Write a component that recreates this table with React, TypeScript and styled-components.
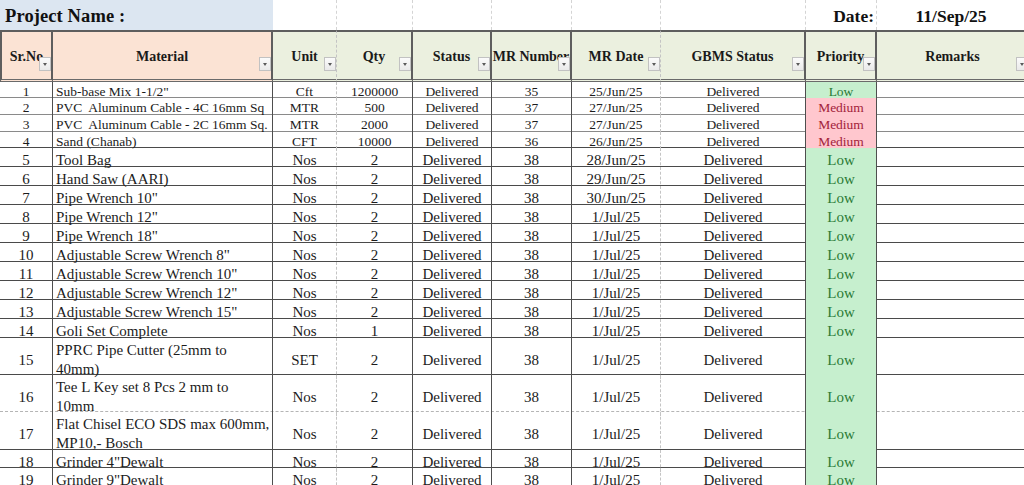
import React from "react";
import styled, { createGlobalStyle, css } from "styled-components";

const GlobalStyle = createGlobalStyle`
  html, body {
    margin: 0;
    padding: 0;
    background: #ffffff;
    overflow: hidden;
  }
  body {
    font-family: "Liberation Serif", "Times New Roman", serif;
    color: #1c1c1c;
  }
`;

type Edge = "solid" | "dashed";
type Align = "left" | "center" | "right";

interface Column {
  key: string;
  title: string;
  width: number;
  align: Align;
  edge: Edge;
  bg: string;
}

const PEACH = "#fbe3d4";
const SAGE = "#ebf0df";

const columns: Column[] = [
  { key: "sr", title: "Sr.No", width: 53, align: "center", edge: "solid", bg: PEACH },
  { key: "material", title: "Material", width: 220, align: "left", edge: "solid", bg: PEACH },
  { key: "unit", title: "Unit", width: 64, align: "center", edge: "dashed", bg: SAGE },
  { key: "qty", title: "Qty", width: 76, align: "center", edge: "solid", bg: SAGE },
  { key: "status", title: "Status", width: 79, align: "center", edge: "solid", bg: SAGE },
  { key: "mrn", title: "MR Number", width: 80, align: "center", edge: "solid", bg: SAGE },
  { key: "mrd", title: "MR Date", width: 89, align: "center", edge: "dashed", bg: SAGE },
  { key: "gbms", title: "GBMS Status", width: 145, align: "center", edge: "solid", bg: SAGE },
  { key: "priority", title: "Priority", width: 71, align: "center", edge: "solid", bg: SAGE },
  { key: "remarks", title: "Remarks", width: 153, align: "center", edge: "solid", bg: SAGE },
];

const template = columns.map((c) => `${c.width}px`).join(" ");

type Level = "Low" | "Medium";

interface Item {
  sr: number;
  material: string;
  unit: string;
  qty: string;
  status: string;
  mrn: string;
  mrd: string;
  gbms: string;
  priority: Level;
  h: number;
  small?: boolean;
  line?: "light" | "dark" | "dashed";
}

const items: Item[] = [
  { sr: 1, material: 'Sub-base Mix 1-1/2"', unit: "Cft", qty: "1200000", status: "Delivered", mrn: "35", mrd: "25/Jun/25", gbms: "Delivered", priority: "Low", h: 16, small: true, line: "light" },
  { sr: 2, material: "PVC  Aluminum Cable - 4C 16mm Sq", unit: "MTR", qty: "500", status: "Delivered", mrn: "37", mrd: "27/Jun/25", gbms: "Delivered", priority: "Medium", h: 17, small: true, line: "light" },
  { sr: 3, material: "PVC  Aluminum Cable - 2C 16mm Sq.", unit: "MTR", qty: "2000", status: "Delivered", mrn: "37", mrd: "27/Jun/25", gbms: "Delivered", priority: "Medium", h: 17, small: true, line: "light" },
  { sr: 4, material: "Sand (Chanab)", unit: "CFT", qty: "10000", status: "Delivered", mrn: "36", mrd: "26/Jun/25", gbms: "Delivered", priority: "Medium", h: 16, small: true },
  { sr: 5, material: "Tool Bag", unit: "Nos", qty: "2", status: "Delivered", mrn: "38", mrd: "28/Jun/25", gbms: "Delivered", priority: "Low", h: 19 },
  { sr: 6, material: "Hand Saw (AARI)", unit: "Nos", qty: "2", status: "Delivered", mrn: "38", mrd: "29/Jun/25", gbms: "Delivered", priority: "Low", h: 19 },
  { sr: 7, material: 'Pipe Wrench 10"', unit: "Nos", qty: "2", status: "Delivered", mrn: "38", mrd: "30/Jun/25", gbms: "Delivered", priority: "Low", h: 19 },
  { sr: 8, material: 'Pipe Wrench 12"', unit: "Nos", qty: "2", status: "Delivered", mrn: "38", mrd: "1/Jul/25", gbms: "Delivered", priority: "Low", h: 19 },
  { sr: 9, material: 'Pipe Wrench 18"', unit: "Nos", qty: "2", status: "Delivered", mrn: "38", mrd: "1/Jul/25", gbms: "Delivered", priority: "Low", h: 19 },
  { sr: 10, material: 'Adjustable Screw Wrench 8"', unit: "Nos", qty: "2", status: "Delivered", mrn: "38", mrd: "1/Jul/25", gbms: "Delivered", priority: "Low", h: 19 },
  { sr: 11, material: 'Adjustable Screw Wrench 10"', unit: "Nos", qty: "2", status: "Delivered", mrn: "38", mrd: "1/Jul/25", gbms: "Delivered", priority: "Low", h: 19 },
  { sr: 12, material: 'Adjustable Screw Wrench 12"', unit: "Nos", qty: "2", status: "Delivered", mrn: "38", mrd: "1/Jul/25", gbms: "Delivered", priority: "Low", h: 19 },
  { sr: 13, material: 'Adjustable Screw Wrench 15"', unit: "Nos", qty: "2", status: "Delivered", mrn: "38", mrd: "1/Jul/25", gbms: "Delivered", priority: "Low", h: 19 },
  { sr: 14, material: "Goli Set Complete", unit: "Nos", qty: "1", status: "Delivered", mrn: "38", mrd: "1/Jul/25", gbms: "Delivered", priority: "Low", h: 19 },
  { sr: 15, material: "PPRC Pipe Cutter (25mm to\n40mm)", unit: "SET", qty: "2", status: "Delivered", mrn: "38", mrd: "1/Jul/25", gbms: "Delivered", priority: "Low", h: 37 },
  { sr: 16, material: "Tee L Key set 8 Pcs 2 mm to\n10mm", unit: "Nos", qty: "2", status: "Delivered", mrn: "38", mrd: "1/Jul/25", gbms: "Delivered", priority: "Low", h: 37, line: "dashed" },
  { sr: 17, material: "Flat Chisel ECO SDS max 600mm,\nMP10,- Bosch", unit: "Nos", qty: "2", status: "Delivered", mrn: "38", mrd: "1/Jul/25", gbms: "Delivered", priority: "Low", h: 38 },
  { sr: 18, material: 'Grinder 4"Dewalt', unit: "Nos", qty: "2", status: "Delivered", mrn: "38", mrd: "1/Jul/25", gbms: "Delivered", priority: "Low", h: 18 },
  { sr: 19, material: 'Grinder 9"Dewalt', unit: "Nos", qty: "2", status: "Delivered", mrn: "38", mrd: "1/Jul/25", gbms: "Delivered", priority: "Low", h: 19 },
];

/* ---------- layout ---------- */

const Sheet = styled.div`
  display: flex;
  flex-direction: column;
  width: 1030px;
`;

const TitleRow = styled.div`
  display: grid;
  grid-template-columns: ${template};
  height: 30px;
`;

const TitleCell = styled.div<{ $span?: number; $align?: Align; $shade?: boolean }>`
  grid-column: span ${(p) => p.$span ?? 1};
  display: flex;
  align-items: center;
  justify-content: ${(p) =>
    p.$align === "left" ? "flex-start" : p.$align === "right" ? "flex-end" : "center"};
  padding: 2px ${(p) => (p.$align === "left" ? "5px" : "2px")} 0;
  box-sizing: border-box;
  background: ${(p) => (p.$shade ? "#dce6f1" : "#ffffff")};
  border-right: 1px dashed ${(p) => (p.$shade ? "transparent" : "#d4d4d4")};
  font-weight: 700;
  color: #111111;
`;

const ProjectLabel = styled.span`
  font-size: 18.5px;
  letter-spacing: 0.1px;
`;

const DateText = styled.span<{ $gap?: number }>`
  font-size: 17.5px;
  margin-left: ${(p) => p.$gap ?? 0}px;
`;

const HeaderRow = styled.div`
  display: grid;
  grid-template-columns: ${template};
  height: 52px;
`;

const HeaderCell = styled.div<{ $bg: string; $edge: Edge; $first?: boolean }>`
  position: relative;
  display: flex;
  align-items: center;
  justify-content: center;
  box-sizing: border-box;
  background: ${(p) => p.$bg};
  border-top: 2px solid #5e5e5e;
  border-bottom: 3px double #6a6a6a;
  border-left: ${(p) => (p.$first ? "2px solid #5e5e5e" : "none")};
  border-right: ${(p) =>
    p.$edge === "solid" ? "2px solid #5e5e5e" : "1px dashed #c4c4c4"};
  font-size: 14px;
  font-weight: 700;
  color: #1a1a1a;
  white-space: nowrap;
  overflow: hidden;
  padding-top: 3px;
`;

const FilterButton = styled.span`
  position: absolute;
  right: 0;
  top: 25px;
  width: 12px;
  height: 14px;
  box-sizing: border-box;
  border: 1px solid #c2c2c2;
  background: linear-gradient(#fbfbfb, #e9e9e9);
  display: flex;
  align-items: center;
  justify-content: center;

  &::after {
    content: "";
    width: 0;
    height: 0;
    border-left: 2.5px solid transparent;
    border-right: 2.5px solid transparent;
    border-top: 3px solid #5a5a5a;
  }
`;

const lineColor = {
  light: "1px solid #8a8a8a",
  dark: "1px solid #4a4a4a",
  dashed: "1px dashed #b5b5b5",
};

const DataRow = styled.div<{ $h: number; $small?: boolean; $line: "light" | "dark" | "dashed" }>`
  --pad-top: ${(p) => (p.$small ? "2px" : "3px")};
  display: grid;
  grid-template-columns: ${template};
  height: ${(p) => p.$h}px;
  box-sizing: border-box;
  border-bottom: ${(p) => lineColor[p.$line]};
  font-size: ${(p) => (p.$small ? "13.5px" : "15px")};
  line-height: ${(p) => (p.$small ? "15px" : "19px")};
`;

const Cell = styled.div<{ $align: Align; $edge: Edge }>`
  display: flex;
  align-items: center;
  justify-content: ${(p) => (p.$align === "left" ? "flex-start" : "center")};
  box-sizing: border-box;
  padding-top: var(--pad-top);
  padding-left: ${(p) => (p.$align === "left" ? "3px" : "0")};
  border-right: ${(p) =>
    p.$edge === "solid" ? "1px solid #4e4e4e" : "1px dashed #c4c4c4"};
  white-space: pre;
  color: #1c1c1c;
`;

const priorityStyles = {
  Low: css`
    background: #c6efce;
    color: #2a7a36;
  `,
  Medium: css`
    background: #ffc7ce;
    color: #a3233a;
  `,
};

const PriorityCell = styled(Cell)<{ $level: Level }>`
  ${(p) => priorityStyles[p.$level]}
  border-left: 1px solid #4e4e4e;
  margin-left: -1px;
`;

/* ---------- component ---------- */

export default function App() {
  return (
    <>
      <GlobalStyle />
      <Sheet>
        <TitleRow>
          <TitleCell $span={2} $align="left" $shade>
            <ProjectLabel>Project Name :</ProjectLabel>
          </TitleCell>
          <TitleCell />
          <TitleCell />
          <TitleCell />
          <TitleCell />
          <TitleCell />
          <TitleCell />
          <TitleCell $align="right">
            <DateText>Date:</DateText>
          </TitleCell>
          <TitleCell>
            <DateText $gap={-4}>11/Sep/25</DateText>
          </TitleCell>
        </TitleRow>

        <HeaderRow>
          {columns.map((c, i) => (
            <HeaderCell key={c.key} $bg={c.bg} $edge={c.edge} $first={i === 0}>
              {c.title}
              <FilterButton />
            </HeaderCell>
          ))}
        </HeaderRow>

        {items.map((it) => (
          <DataRow key={it.sr} $h={it.h} $small={it.small} $line={it.line ?? "dark"}>
            <Cell $align="center" $edge="solid">{it.sr}</Cell>
            <Cell $align="left" $edge="solid">{it.material}</Cell>
            <Cell $align="center" $edge="dashed">{it.unit}</Cell>
            <Cell $align="center" $edge="solid">{it.qty}</Cell>
            <Cell $align="center" $edge="solid">{it.status}</Cell>
            <Cell $align="center" $edge="solid">{it.mrn}</Cell>
            <Cell $align="center" $edge="dashed">{it.mrd}</Cell>
            <Cell $align="center" $edge="solid">{it.gbms}</Cell>
            <PriorityCell $align="center" $edge="solid" $level={it.priority}>
              {it.priority}
            </PriorityCell>
            <Cell $align="center" $edge="solid" />
          </DataRow>
        ))}
      </Sheet>
    </>
  );
}
